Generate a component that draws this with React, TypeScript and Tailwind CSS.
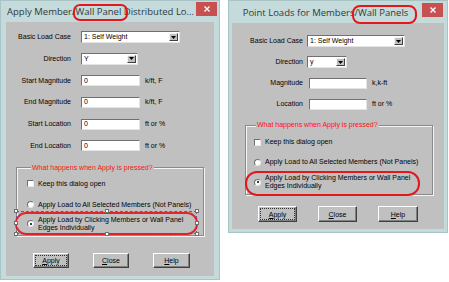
import React from "react";

const SANS = "font-['Liberation_Sans',Arial,sans-serif]";

function DropBtn() {
  return (
    <div className="ml-auto h-full w-[9px] bg-[#c0c0c0] border border-t-[#f4f4f4] border-l-[#f4f4f4] border-r-[#404040] border-b-[#404040] flex items-center justify-center">
      <svg width="5" height="3" viewBox="0 0 5 3">
        <path d="M0 0 H5 L2.5 3 Z" fill="#000" />
      </svg>
    </div>
  );
}

function Combo({ w, text }: { w: string; text: string }) {
  return (
    <div className={`${w} h-[12px] bg-white border border-t-[#707070] border-l-[#707070] border-r-[#e4e4e4] border-b-[#e4e4e4] flex items-center pl-[2px] pr-[1px] py-[1px]`}>
      <span className="text-[7px] leading-[8px] text-black whitespace-nowrap">{text}</span>
      <DropBtn />
    </div>
  );
}

function Input({ w, value, extra = "" }: { w: string; value: string; extra?: string }) {
  return (
    <div className={`${w} ${extra} h-[11px] bg-white border border-t-[#707070] border-l-[#707070] border-r-[#e4e4e4] border-b-[#e4e4e4] flex items-center pl-[2px]`}>
      <span className="text-[7px] leading-[8px] text-black">{value}</span>
    </div>
  );
}

function Row({
  label,
  labelW,
  children,
  unit,
}: {
  label: string;
  labelW: string;
  children: React.ReactNode;
  unit?: string;
}) {
  return (
    <div className="flex items-center h-[12px]">
      <div className={`${labelW} text-right text-[7px] leading-[8px] text-black whitespace-nowrap`}>{label}</div>
      {children}
      {unit && <span className="ml-[5px] text-[7px] leading-[8px] text-black whitespace-nowrap">{unit}</span>}
    </div>
  );
}

function Check() {
  return <div className="w-[7px] h-[7px] bg-white border border-t-[#707070] border-l-[#707070] border-r-[#e8e8e8] border-b-[#e8e8e8] shrink-0" />;
}

function Radio({ on }: { on?: boolean }) {
  return (
    <div className="w-[7px] h-[7px] rounded-full bg-white border border-t-[#707070] border-l-[#707070] border-r-[#e8e8e8] border-b-[#e8e8e8] shrink-0 flex items-center justify-center">
      {on && <div className="w-[2px] h-[2px] rounded-full bg-black" />}
    </div>
  );
}

function Btn({ w, h, label, rest, focus }: { w: string; h: string; label: string; rest: string; focus?: boolean }) {
  return (
    <div className={`${w} ${h} bg-[#c0c0c0] border border-t-white border-l-white border-r-[#404040] border-b-[#404040] shadow-[inset_-1px_-1px_0_#808080] flex items-center justify-center p-[1px]`}>
      <div className={`w-full h-full flex items-center justify-center border border-dotted ${focus ? "border-[#303030]" : "border-transparent"}`}>
        <span className="text-[7px] leading-[7px] text-black">
          <span className="underline">{label}</span>
          {rest}
        </span>
      </div>
    </div>
  );
}

function CloseX({ cls }: { cls: string }) {
  return (
    <div className={`${cls} w-[21px] h-[14px] bg-[#c75050] flex items-center justify-center shrink-0`}>
      <svg width="6" height="6" viewBox="0 0 6 6">
        <path d="M0.5 0.5 L5.5 5.5 M5.5 0.5 L0.5 5.5" stroke="#fff" strokeWidth="1.3" />
      </svg>
    </div>
  );
}

function Handle({ cls }: { cls: string }) {
  return <div className={`absolute ${cls} w-[4px] h-[4px] bg-white border border-[#707070]`} />;
}

function LeftDialog() {
  return (
    <div className={`relative w-[220px] h-[280px] shrink-0 bg-[#c5dada] border border-[#a9c4c4] flex flex-col ${SANS}`}>
      <div className="h-[21px] flex items-start">
        <span className="mt-[4px] ml-[6px] font-['Open_Sans',sans-serif] text-[9.5px] leading-[13px] text-[#2e3a3a] whitespace-nowrap">
          Apply Member/Wall Panel Distributed Lo...
        </span>
        <CloseX cls="ml-auto mr-[2px] mt-[1px]" />
      </div>
      <div className="mx-[5px] mb-[3px] flex-1 bg-[#c0c0c0] flex flex-col">
        <div className="pt-[9px] flex flex-col gap-[9.8px]">
          <Row label="Basic Load Case" labelW="w-[65px]">
            <div className="ml-[10px]"><Combo w="w-[99px]" text="1: Self Weight" /></div>
          </Row>
          <Row label="Direction" labelW="w-[65px]">
            <div className="ml-[10px]"><Combo w="w-[57px]" text="Y" /></div>
          </Row>
          <Row label="Start Magnitude" labelW="w-[65px]" unit="k/ft, F">
            <Input w="w-[59px]" value="0" extra="ml-[10px]" />
          </Row>
          <Row label="End Magnitude" labelW="w-[65px]" unit="k/ft, F">
            <Input w="w-[59px]" value="0" extra="ml-[10px]" />
          </Row>
          <Row label="Start Location" labelW="w-[65px]" unit="ft or %">
            <Input w="w-[59px]" value="0" extra="ml-[10px]" />
          </Row>
          <Row label="End Location" labelW="w-[65px]" unit="ft or %">
            <Input w="w-[59px]" value="0" extra="ml-[10px]" />
          </Row>
        </div>
        <fieldset className="mt-[12px] ml-[10px] w-[188px] border border-[#8a8a8a] shadow-[inset_1px_1px_0_#f4f4f4,1px_1px_0_#f4f4f4] pl-[10px] pb-[3px]">
          <legend className="ml-[4px] px-[1px] bg-[#c0c0c0] text-[7px] leading-[8px] text-[#ff1010]">
            What happens when Apply is pressed?
          </legend>
          <div className="mt-[8px] flex items-center gap-[4px] h-[8px]">
            <Check />
            <span className="text-[7px] leading-[8px] text-black">Keep this dialog open</span>
          </div>
          <div className="mt-[13px] flex items-center gap-[4px] h-[8px]">
            <Radio />
            <span className="text-[7px] leading-[8px] text-black whitespace-nowrap">Apply Load to All Selected Members (Not Panels)</span>
          </div>
          <div className="mt-[7px] flex items-center gap-[4px]">
            <Radio on />
            <span className="text-[7px] leading-[8px] text-black">
              Apply Load by Clicking Members or Wall Panel
              <br />
              Edges Individually
            </span>
          </div>
        </fieldset>
        <div className="mt-[17px] pl-[27px] flex gap-[24px]">
          <Btn w="w-[36px]" h="h-[15px]" label="A" rest="pply" focus />
          <Btn w="w-[36px]" h="h-[15px]" label="C" rest="lose" />
          <Btn w="w-[37px]" h="h-[15px]" label="H" rest="elp" />
        </div>
      </div>

      {/* annotations */}
      <div className="absolute left-[72px] top-[3px] w-[55px] h-[17px] border-[2.5px] border-[#e5161c] rounded-[7px]" />
      <div className="absolute left-[15px] top-[210px] w-[181px] h-[23px] border border-dashed border-[#5a56c8]" />
      <div className="absolute left-[14px] top-[211px] w-[183px] h-[23px] border-[2.5px] border-[#e5161c] rounded-[11px] opacity-90" />
      <Handle cls="left-[13px] top-[208px]" />
      <Handle cls="left-[104px] top-[208px]" />
      <Handle cls="left-[194px] top-[208px]" />
      <Handle cls="left-[13px] top-[220px]" />
      <Handle cls="left-[194px] top-[220px]" />
      <Handle cls="left-[13px] top-[231px]" />
      <Handle cls="left-[104px] top-[231px]" />
      <Handle cls="left-[194px] top-[231px]" />
    </div>
  );
}

function RightDialog() {
  return (
    <div className={`relative w-[220px] h-[233px] shrink-0 bg-[#c5dada] border border-[#a9c4c4] flex flex-col ${SANS}`}>
      <div className="h-[22px] flex items-start">
        <span className="flex-1 mt-[5px] text-center font-['Open_Sans',sans-serif] text-[9.5px] leading-[13px] text-[#2e3a3a] whitespace-nowrap">
          Point Loads for Members/Wall Panels
        </span>
        <CloseX cls="mr-[4px] mt-[2px]" />
      </div>
      <div className="mx-[3px] mb-[3px] flex-1 bg-[#c0c0c0] flex flex-col">
        <div className="pt-[12px] flex flex-col gap-[9px]">
          <Row label="Basic Load Case" labelW="w-[71px]">
            <div className="ml-[4px]"><Combo w="w-[98px]" text="1: Self Weight" /></div>
          </Row>
          <Row label="Direction" labelW="w-[71px]">
            <div className="ml-[4px]"><Combo w="w-[40px]" text="y" /></div>
          </Row>
          <Row label="Magnitude" labelW="w-[71px]" unit="k,k-ft">
            <Input w="w-[58px]" value="" extra="ml-[6px]" />
          </Row>
          <Row label="Location" labelW="w-[71px]" unit="ft or %">
            <Input w="w-[58px]" value="" extra="ml-[6px]" />
          </Row>
        </div>
        <fieldset className="mt-[11px] ml-[13px] w-[188px] border border-[#8a8a8a] shadow-[inset_1px_1px_0_#f4f4f4,1px_1px_0_#f4f4f4] pl-[8px] pb-[4px]">
          <legend className="ml-[2px] px-[1px] bg-[#c0c0c0] text-[7px] leading-[8px] text-[#ff1010]">
            What happens when Apply is pressed?
          </legend>
          <div className="mt-[9px] flex items-center gap-[4px] h-[8px]">
            <Check />
            <span className="text-[7px] leading-[8px] text-black">Keep this dialog open</span>
          </div>
          <div className="mt-[12px] flex items-center gap-[4px] h-[8px]">
            <Radio />
            <span className="text-[7px] leading-[8px] text-black whitespace-nowrap">Apply Load to All Selected Members (Not Panels)</span>
          </div>
          <div className="mt-[8px] flex items-center gap-[4px]">
            <Radio on />
            <span className="text-[7px] leading-[8px] text-black">
              Apply Load by Clicking Members or Wall Panel
              <br />
              Edges Individually
            </span>
          </div>
        </fieldset>
        <div className="mt-[11px] pl-[26px] flex gap-[21px]">
          <Btn w="w-[39px]" h="h-[16px]" label="A" rest="pply" focus />
          <Btn w="w-[39px]" h="h-[16px]" label="C" rest="lose" />
          <Btn w="w-[40px]" h="h-[16px]" label="H" rest="elp" />
        </div>
      </div>

      {/* annotations */}
      <div className="absolute left-[123px] top-[4px] w-[65px] h-[19px] border-[2.5px] border-[#e5161c] rounded-[8px]" />
      <div className="absolute left-[16px] top-[170px] w-[175px] h-[25px] border-[2.5px] border-[#e5161c] rounded-[12px]" />
    </div>
  );
}

export default function App() {
  return (
    <div className="w-[449px] h-[282px] bg-white flex items-start gap-[8px] overflow-hidden">
      <LeftDialog />
      <RightDialog />
    </div>
  );
}
